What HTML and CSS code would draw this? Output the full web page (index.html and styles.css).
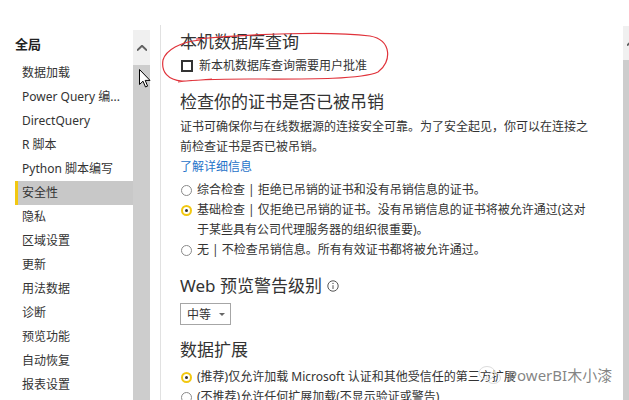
FILE: index.html
```html
<!DOCTYPE html>
<html lang="zh-CN">
<head>
  <meta charset="UTF-8">
  <title>选项 - 安全性</title>
  <link rel="stylesheet" href="styles.css">
</head>
<body>
<div class="window">
  <!-- Left navigation -->
  <div class="nav">
    <h3 class="nav-title">全局</h3>
    <ul class="nav-list">
      <li>数据加载</li>
      <li>Power Query 编...</li>
      <li>DirectQuery</li>
      <li>R 脚本</li>
      <li>Python 脚本编写</li>
      <li class="active">安全性</li>
      <li>隐私</li>
      <li>区域设置</li>
      <li>更新</li>
      <li>用法数据</li>
      <li>诊断</li>
      <li>预览功能</li>
      <li>自动恢复</li>
      <li>报表设置</li>
    </ul>
  </div>

  <div class="scrollbar">
    <div class="scroll-up">
      <svg viewBox="0 0 10 6"><path d="M0 5.5 L5 0.8 L10 5.5" /></svg>
    </div>
    <div class="scroll-thumb"></div>
  </div>

  <div class="divider"></div>

  <!-- Settings content -->
  <div class="content">
    <h2 class="section-title">本机数据库查询</h2>
    <label class="check-row"><span class="checkbox"></span>新本机数据库查询需要用户批准</label>

    <h2 class="section-title gap">检查你的证书是否已被吊销</h2>
    <p class="desc">证书可确保你与在线数据源的连接安全可靠。为了安全起见，你可以在连接之<br>前检查证书是否已被吊销。</p>
    <a class="link">了解详细信息</a>

    <div class="options">
      <div class="radio-row"><span class="radio"></span><span>综合检查 | 拒绝已吊销的证书和没有吊销信息的证书。</span></div>
      <div class="radio-row"><span class="radio on"></span><span>基础检查 | 仅拒绝已吊销的证书。没有吊销信息的证书将被允许通过(这对<br>于某些具有公司代理服务器的组织很重要)。</span></div>
      <div class="radio-row"><span class="radio"></span><span>无 | 不检查吊销信息。所有有效证书都将被允许通过。</span></div>
    </div>

    <h2 class="section-title gap">Web 预览警告级别
      <svg class="info" viewBox="0 0 12 12"><circle cx="6" cy="6" r="5.2"/><path d="M6 5.2 V9"/><circle class="dot" cx="6" cy="3.4" r="0.7"/></svg>
    </h2>
    <div class="dropdown">中等<span class="caret"></span></div>

    <h2 class="section-title gap2">数据扩展</h2>
    <div class="options small-gap">
      <div class="radio-row"><span class="radio on"></span><span>(推荐)仅允许加载 Microsoft 认证和其他受信任的第三方扩展</span></div>
      <div class="radio-row"><span class="radio"></span><span>(不推荐)允许任何扩展加载(不显示验证或警告)</span></div>
    </div>
  </div>

  <div class="scrollbar right">
    <div class="scroll-up">
      <svg viewBox="0 0 10 6"><path d="M0 5.5 L5 0.8 L10 5.5" /></svg>
    </div>
    <div class="scroll-thumb"></div>
  </div>

  <!-- Red hand-drawn annotation -->
  <svg class="annotation" viewBox="0 0 629 400">
    <path d="M196 39 C250 34 330 31 370 36 C392 40 392 62 378 72 C360 80 300 79 250 79 C215 79 190 80 178 82 M200 40 C180 42 166 50 163 60 C161 72 168 80 182 81 C190 81 200 80 212 79" />
  </svg>

  <!-- Mouse cursor -->
  <svg class="cursor" viewBox="0 0 12 19">
    <path d="M0.5 0.5 L0.5 15.5 L4 12.2 L6.5 18 L8.6 17.1 L6.2 11.4 L11 11.4 Z" />
  </svg>

  <!-- Watermark -->
  <div class="watermark">
    <svg viewBox="0 0 24 20"><ellipse cx="9" cy="8" rx="8" ry="6.5"/><ellipse cx="15.5" cy="13" rx="7" ry="5.5"/></svg>
    <span>PowerBI木小漆</span>
  </div>
</div>
</body>
</html>
```

FILE: styles.css
```css
html, body {
  margin: 0;
  height: 100%;
  overflow: hidden;
  background: #fff;
}

body {
  font-family: "Noto Sans", "Noto Sans CJK SC", sans-serif;
  color: #333;
  font-size: 12px;
}

.window {
  position: relative;
  display: flex;
  height: 400px;
}

/* Left navigation */
.nav {
  width: 133px;
  padding-top: 34px;
  box-sizing: border-box;
}

.nav-title {
  margin: 0 0 7px 15px;
  font-size: 13px;
  line-height: 20px;
  font-weight: bold;
  color: #222;
}

.nav-list {
  list-style: none;
  margin: 0 0 0 15px;
  padding: 0;
}

.nav-list li {
  height: 24px;
  line-height: 24px;
  padding-left: 7px;
  white-space: nowrap;
  color: #333;
}

.nav-list li.active {
  background: #c8c8c8;
  border-left: 3px solid #f2c811;
  padding-left: 4px;
}

/* Scrollbars */
.scrollbar {
  width: 17px;
  margin-top: 30px;
  display: flex;
  flex-direction: column;
}

.scroll-up {
  height: 35px;
  background: #f0f0f0;
  display: flex;
  align-items: center;
  justify-content: center;
}

.scroll-up svg {
  width: 10px;
  height: 6px;
  fill: none;
  stroke: #606060;
  stroke-width: 2;
}

.scroll-thumb {
  flex: 1;
  background: #cdcdcd;
}

.scrollbar.right {
  width: 17px;
  margin-top: 26px;
  margin-left: auto;
  position: relative;
  left: 11px;
}

.scrollbar.right .scroll-up {
  height: 34px;
}

.divider {
  width: 1px;
  margin: 25px 0 0 10px;
  background: #e1e1e1;
}

/* Content */
.content {
  padding: 30px 0 0 19px;
  width: 430px;
}

.section-title {
  margin: 0;
  font-size: 17px;
  line-height: 24px;
  font-weight: normal;
  color: #333;
  display: flex;
  align-items: center;
  white-space: nowrap;
}

.section-title.gap {
  margin-top: 14px;
}

.section-title.gap2 {
  margin-top: 13px;
}

.check-row {
  display: flex;
  align-items: center;
  margin-top: 2px;
  line-height: 20px;
  color: #333;
}

.checkbox {
  width: 8px;
  height: 8px;
  border: 2px solid #333;
  margin: 0 6px 0 1px;
}

.desc {
  margin: 3px 0 0;
  line-height: 20px;
}

.link {
  display: block;
  color: #1f73c9;
  line-height: 20px;
}

.options {
  margin-top: 3px;
}

.options.small-gap {
  margin-top: 5px;
}

.radio-row {
  display: flex;
  align-items: flex-start;
  line-height: 20px;
  white-space: nowrap;
}

.radio {
  flex: none;
  width: 9px;
  height: 9px;
  margin: 5px 5px 0 1px;
  border: 1px solid #8a8a8a;
  border-radius: 50%;
  position: relative;
}

.radio.on {
  width: 7px;
  height: 7px;
  border: 2px solid #f2c811;
}

.radio.on::after {
  content: "";
  position: absolute;
  left: 2px;
  top: 2px;
  width: 3px;
  height: 3px;
  border-radius: 50%;
  background: #333;
}

.info {
  width: 12px;
  height: 12px;
  margin-left: 5px;
  fill: none;
  stroke: #555;
  stroke-width: 1;
}

.info .dot {
  fill: #555;
  stroke: none;
}

.dropdown {
  margin-top: 5px;
  height: 20px;
  border: 1px solid #a6a6a6;
  display: flex;
  align-items: center;
  padding-left: 6px;
  width: 43px;
  color: #333;
}

.caret {
  margin-left: 8px;
  border-left: 3px solid transparent;
  border-right: 3px solid transparent;
  border-top: 3px solid #666;
}

/* Overlays */
.annotation {
  position: absolute;
  left: 0;
  top: 0;
  width: 629px;
  height: 400px;
  fill: none;
  stroke: #e0323a;
  stroke-width: 1.2;
  pointer-events: none;
}

.cursor {
  position: absolute;
  left: 139px;
  top: 69px;
  width: 12px;
  height: 19px;
  fill: #fff;
  stroke: #000;
  stroke-width: 1;
}

.watermark {
  position: absolute;
  left: 478px;
  top: 364px;
  display: flex;
  align-items: center;
  gap: 6px;
  color: rgba(110, 110, 110, 0.85);
  font-size: 15px;
  text-shadow: 0 0 1px rgba(255, 255, 255, 0.8);
}

.watermark svg {
  width: 24px;
  height: 20px;
  fill: none;
  stroke: #dcdcdc;
  stroke-width: 1;
}
```
